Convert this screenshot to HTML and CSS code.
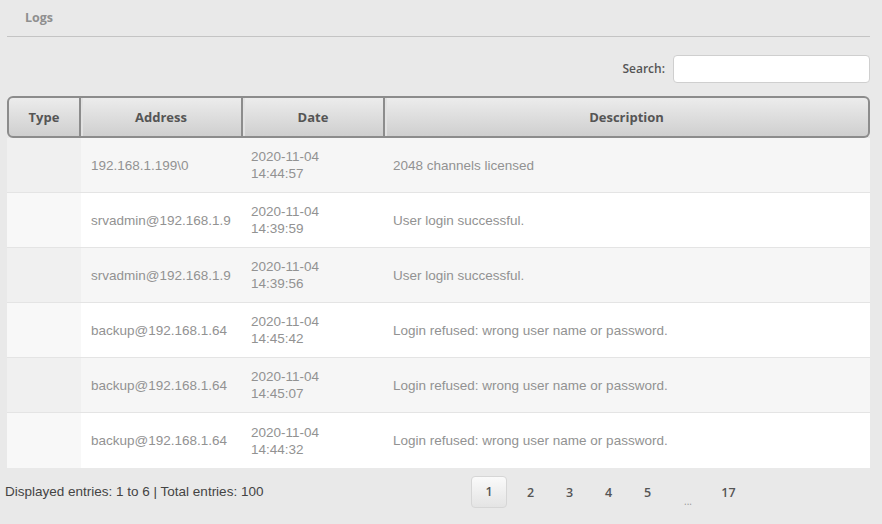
FILE: index.html
```html
<!DOCTYPE html>
<html lang="en">
<head>
  <meta charset="UTF-8">
  <title>Logs</title>
  <link rel="stylesheet" href="styles.css">
</head>
<body>
  <div class="page">
    <div class="title">Logs</div>

    <div class="toolbar">
      <label for="search">Search:</label>
      <input type="text" id="search" class="search-input">
    </div>

    <table class="logs">
      <thead>
        <tr>
          <th class="col-type">Type</th>
          <th class="col-addr">Address</th>
          <th class="col-date">Date</th>
          <th class="col-desc">Description</th>
        </tr>
      </thead>
      <tbody>
        <tr>
          <td class="type"></td>
          <td>192.168.1.199\0</td>
          <td>2020-11-04<br>14:44:57</td>
          <td>2048 channels licensed</td>
        </tr>
        <tr>
          <td class="type"></td>
          <td>srvadmin@192.168.1.9</td>
          <td>2020-11-04<br>14:39:59</td>
          <td>User login successful.</td>
        </tr>
        <tr>
          <td class="type"></td>
          <td>srvadmin@192.168.1.9</td>
          <td>2020-11-04<br>14:39:56</td>
          <td>User login successful.</td>
        </tr>
        <tr>
          <td class="type"></td>
          <td>backup@192.168.1.64</td>
          <td>2020-11-04<br>14:45:42</td>
          <td>Login refused: wrong user name or password.</td>
        </tr>
        <tr>
          <td class="type"></td>
          <td>backup@192.168.1.64</td>
          <td>2020-11-04<br>14:45:07</td>
          <td>Login refused: wrong user name or password.</td>
        </tr>
        <tr>
          <td class="type"></td>
          <td>backup@192.168.1.64</td>
          <td>2020-11-04<br>14:44:32</td>
          <td>Login refused: wrong user name or password.</td>
        </tr>
      </tbody>
    </table>

    <div class="footer">
      <div class="info">Displayed entries: 1 to 6 | Total entries: 100</div>
      <div class="pager">
        <span class="page-btn current">1</span>
        <span class="page-btn">2</span>
        <span class="page-btn">3</span>
        <span class="page-btn">4</span>
        <span class="page-btn">5</span>
        <span class="page-btn dots">...</span>
        <span class="page-btn">17</span>
      </div>
    </div>
  </div>
</body>
</html>
```

FILE: styles.css
```css
/* Page */
html, body {
  margin: 0;
  padding: 0;
  background: #e9e9e9;
}

.page {
  width: 863px;
  margin-left: 7px;
  font-family: "Liberation Sans", Arial, sans-serif;
  font-size: 13.5px;
}

/* Title with rule */
.title {
  height: 36px;
  line-height: 36px;
  padding-left: 18px;
  border-bottom: 1px solid #c4c4c4;
  font-family: "Open Sans", sans-serif;
  font-weight: 700;
  font-size: 12.5px;
  color: #8f8f8f;
}

/* Search row */
.toolbar {
  display: flex;
  justify-content: flex-end;
  align-items: center;
  gap: 8px;
  margin-top: 17px;
  height: 29px;
}

.toolbar label {
  font-family: "Open Sans", sans-serif;
  font-weight: 600;
  font-size: 12px;
  color: #555;
}

.search-input {
  width: 197px;
  height: 28px;
  box-sizing: border-box;
  border: 1px solid #cfcfcf;
  border-radius: 4px;
  background: #fff;
  margin: 0;
}

/* Table */
.logs {
  width: 100%;
  margin-top: 13px;
  border-collapse: separate;
  border-spacing: 0;
}

.logs th {
  height: 42px;
  box-sizing: border-box;
  padding: 0;
  background: linear-gradient(#ececec, #cfcfcf);
  border-top: 2px solid #8c8c8c;
  border-bottom: 2px solid #8c8c8c;
  border-right: 2px solid #8c8c8c;
  box-shadow: inset 2px 0 0 #e2e2e2;
  font-family: "Open Sans", sans-serif;
  font-weight: 700;
  font-size: 13px;
  color: #555;
  text-align: center;
}

.logs th.col-type {
  border-left: 2px solid #8c8c8c;
  border-radius: 6px 0 0 6px;
  box-shadow: none;
}

.logs th.col-desc {
  border-radius: 0 6px 6px 0;
}

.col-type { width: 74px; }
.col-addr { width: 162px; }
.col-date { width: 142px; }

.logs td {
  height: 55px;
  box-sizing: border-box;
  padding: 0 0 0 8px;
  border-bottom: 1px solid #e4e4e4;
  color: #929292;
  font-size: 13.5px;
  line-height: 17px;
  background: #fff;
  vertical-align: middle;
}

.logs td:nth-child(2) { padding-left: 10px; }

.logs tbody tr:nth-child(odd) td { background: #f6f6f6; }
.logs tbody tr td.type { background: #f8f8f8; }
.logs tbody tr:nth-child(odd) td.type { background: #f0f0f0; }
.logs tbody tr:last-child td { border-bottom: none; }

/* Footer */
.footer {
  display: flex;
  align-items: flex-start;
  margin-top: 8px;
}

.info {
  width: 466px;
  color: #444;
  font-size: 13.5px;
  padding-top: 8px;
  margin-left: -2px;
}

.pager {
  display: flex;
  align-items: center;
  height: 32px;
}

.page-btn {
  width: 39px;
  text-align: center;
  font-family: "Open Sans", sans-serif;
  font-weight: 600;
  font-size: 12.5px;
  color: #555;
}

.page-btn.current {
  width: 34px;
  height: 30px;
  line-height: 30px;
  margin-right: 4px;
  border: 1px solid #d6d6d6;
  border-radius: 4px;
  background: linear-gradient(#fafafa, #e4e4e4);
}

.page-btn.dots {
  width: 42px;
  padding-top: 18px;
  font-size: 10px;
  color: #999;
  font-weight: 400;
}
```
